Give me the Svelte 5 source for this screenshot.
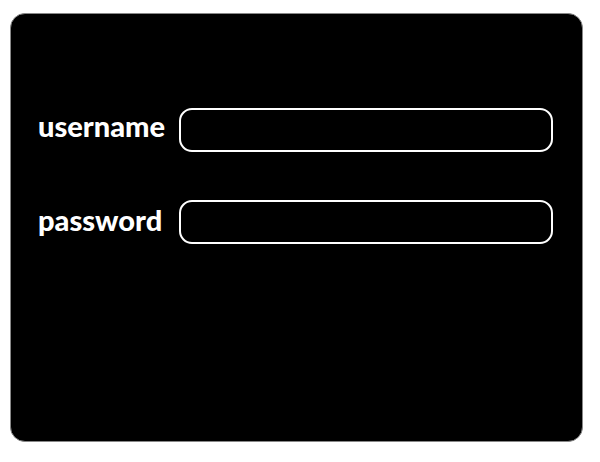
<script>
  let username = $state('');
  let password = $state('');
</script>

<form class="panel" onsubmit={(event) => event.preventDefault()}>
  <div class="labels">
    <label for="username">username</label>
    <label for="password">password</label>
  </div>
  <div class="fields">
    <input id="username" type="text" autocomplete="username" bind:value={username} />
    <input id="password" type="password" autocomplete="current-password" bind:value={password} />
  </div>
</form>

<style>
  :global(body) {
    margin: 0;
    background: #fff;
  }

  .panel {
    box-sizing: border-box;
    display: flex;
    align-items: flex-start;
    gap: 14px;
    min-height: calc(100vh - 33px);
    margin: 13px 17px 20px 10px;
    padding: 94px 29px 32px 27px;
    border: 1px solid #888;
    border-radius: 15px;
    background: #000;
  }

  .labels,
  .fields {
    display: flex;
    flex-direction: column;
  }

  .labels {
    flex: 0 0 126px;
    gap: 58px;
  }

  .fields {
    flex: 1;
    gap: 48px;
    min-width: 0;
  }

  label {
    color: #fff;
    font: 900 29px/36px Lato, sans-serif;
    white-space: nowrap;
  }

  input {
    box-sizing: border-box;
    width: 100%;
    height: 44px;
    padding: 0 12px;
    border: 2px solid #fff;
    border-radius: 13px;
    outline: none;
    background: #000;
    color: #fff;
    font: 20px Lato, sans-serif;
  }
</style>
